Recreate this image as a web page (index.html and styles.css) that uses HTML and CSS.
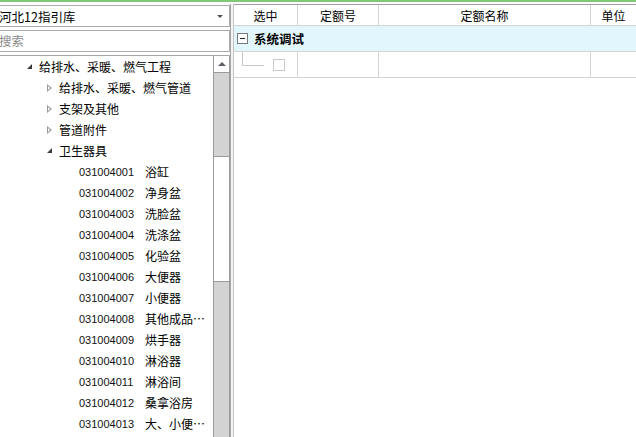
FILE: index.html
```html
<!DOCTYPE html>
<html lang="zh-CN">
<head>
  <meta charset="UTF-8" />
  <title>定额指引</title>
  <link rel="stylesheet" href="styles.css">
</head>
<body>
  <div class="topline"></div>
  <div class="main">
    <!-- Left: library + tree -->
    <div class="left">
      <div class="combo">
        <span class="combo-text">河北12指引库</span>
        <span class="combo-arrow"></span>
      </div>
      <div class="search">搜索</div>
      <div class="tree">
        <div class="tree-list">
          <div class="node lvl0"><span class="tri open"></span>给排水、采暖、燃气工程</div>
          <div class="node lvl1"><span class="tri closed"></span>给排水、采暖、燃气管道</div>
          <div class="node lvl1"><span class="tri closed"></span>支架及其他</div>
          <div class="node lvl1"><span class="tri closed"></span>管道附件</div>
          <div class="node lvl1"><span class="tri open"></span>卫生器具</div>
          <div class="node leaf"><span class="code">031004001</span><span class="name">浴缸</span></div>
          <div class="node leaf"><span class="code">031004002</span><span class="name">净身盆</span></div>
          <div class="node leaf"><span class="code">031004003</span><span class="name">洗脸盆</span></div>
          <div class="node leaf"><span class="code">031004004</span><span class="name">洗涤盆</span></div>
          <div class="node leaf"><span class="code">031004005</span><span class="name">化验盆</span></div>
          <div class="node leaf"><span class="code">031004006</span><span class="name">大便器</span></div>
          <div class="node leaf"><span class="code">031004007</span><span class="name">小便器</span></div>
          <div class="node leaf"><span class="code">031004008</span><span class="name">其他成品…</span></div>
          <div class="node leaf"><span class="code">031004009</span><span class="name">烘手器</span></div>
          <div class="node leaf"><span class="code">031004010</span><span class="name">淋浴器</span></div>
          <div class="node leaf"><span class="code">031004011</span><span class="name">淋浴间</span></div>
          <div class="node leaf"><span class="code">031004012</span><span class="name">桑拿浴房</span></div>
          <div class="node leaf"><span class="code">031004013</span><span class="name">大、小便…</span></div>
        </div>
        <div class="scrollbar">
          <div class="sb-up"><span class="up-arrow"></span></div>
          <div class="sb-track top"></div>
          <div class="sb-thumb"></div>
          <div class="sb-track"></div>
        </div>
      </div>
    </div>

    <div class="splitter"></div>

    <!-- Right: grid -->
    <div class="right">
      <div class="row header">
        <div class="cell c1">选中</div>
        <div class="cell c2">定额号</div>
        <div class="cell c3">定额名称</div>
        <div class="cell c4">单位</div>
      </div>
      <div class="row group">
        <span class="minus"></span>
        <span class="group-title">系统调试</span>
      </div>
      <div class="row data">
        <div class="cell c1">
          <span class="connector"></span>
          <span class="check"></span>
        </div>
        <div class="cell c2"></div>
        <div class="cell c3"></div>
        <div class="cell c4"></div>
      </div>
    </div>
  </div>
</body>
</html>
```

FILE: styles.css
```css
* {
  margin: 0;
  padding: 0;
  box-sizing: border-box;
}
body {
  width: 636px;
  height: 437px;
  overflow: hidden;
  background: #fff;
  color: #000;
  font-family: "Noto Sans CJK SC", "Liberation Sans", sans-serif;
  font-size: 12px;
}
.topline {
  height: 2px;
  background: #7ec876;
}
.main {
  display: flex;
  height: 435px;
}

/* Left panel */
.left {
  width: 230px;
  display: flex;
  flex-direction: column;
  padding-top: 3px;
}
.combo {
  height: 22px;
  border: 1px solid #ababab;
  border-left: none;
  display: flex;
  align-items: center;
  justify-content: space-between;
  padding-right: 6px;
}
.combo-text {
  font-size: 12.5px;
  margin-left: -1px;
}
.combo-arrow {
  width: 0;
  height: 0;
  border-left: 3px solid transparent;
  border-right: 3px solid transparent;
  border-top: 3px solid #555;
}
.search {
  height: 22px;
  margin-top: 3px;
  border: 1px solid #ababab;
  border-left: none;
  color: #8a8a8a;
  font-size: 12.5px;
  line-height: 20px;
  text-indent: -1px;
}
.tree {
  flex: 1;
  margin-top: 3px;
  border-top: 1px solid #a6a6a6;
  display: flex;
  overflow: hidden;
}
.tree-list {
  flex: 1;
  overflow: hidden;
}
.node {
  height: 21px;
  display: flex;
  align-items: center;
  white-space: nowrap;
}
.node:first-child {
  height: 21px;
}
.lvl0 {
  padding-left: 25px;
}
.lvl1 {
  padding-left: 45px;
}
.tri {
  width: 14px;
  display: inline-block;
  position: relative;
  height: 10px;
}
.tri.closed::before {
  content: "";
  position: absolute;
  left: 2px;
  top: 1px;
  border-top: 4px solid transparent;
  border-bottom: 4px solid transparent;
  border-left: 5px solid #9a9a9a;
}
.tri.closed::after {
  content: "";
  position: absolute;
  left: 3px;
  top: 3px;
  border-top: 2px solid transparent;
  border-bottom: 2px solid transparent;
  border-left: 2.5px solid #fff;
}
.tri.open::before {
  content: "";
  position: absolute;
  left: 2px;
  top: 2px;
  border-left: 5px solid transparent;
  border-bottom: 5px solid #3a3a3a;
}
.leaf {
  padding-left: 79px;
}
.code {
  width: 66px;
  font-family: "Liberation Sans", sans-serif;
  font-size: 11px;
  color: #111;
}
.name {
  font-size: 12px;
}

/* Scrollbar */
.scrollbar {
  width: 17px;
  display: flex;
  flex-direction: column;
  border-left: 1px solid #9a9a9a;
  border-right: 1px solid #9a9a9a;
}
.sb-up {
  height: 17px;
  background: #fff;
  border-bottom: 1px solid #9a9a9a;
  display: flex;
  align-items: center;
  justify-content: center;
}
.up-arrow {
  width: 0;
  height: 0;
  border-left: 4px solid transparent;
  border-right: 4px solid transparent;
  border-bottom: 4px solid #5d5d6a;
}
.sb-track {
  background: #d3d3d3;
  flex: 1;
}
.sb-track.top {
  flex: none;
  height: 83px;
}
.sb-thumb {
  height: 126px;
  background: #fff;
  border-top: 1px solid #9a9a9a;
  border-bottom: 1px solid #9a9a9a;
}

.splitter {
  width: 4px;
  margin-top: 2px;
  border-left: 1px solid #a6a6a6;
  border-right: 1px solid #c4c4c4;
  background: #f4f4f4;
}

/* Right grid */
.right {
  flex: 1;
  padding-top: 2px;
}
.row {
  display: flex;
}
.cell {
  border-right: 1px solid #d4d4d4;
  display: flex;
  align-items: center;
  justify-content: center;
}
.c1 { width: 64px; }
.c2 { width: 81px; }
.c3 { width: 212px; }
.c4 { flex: 1; border-right: none; }
.header {
  height: 22px;
  border-top: 1px solid #a0a0a0;
  border-bottom: 1px solid #d4d4d4;
}
.header .cell {
  font-size: 12px;
}
.group {
  height: 26px;
  background: #e1f6fd;
  border-bottom: 1px solid #d4d4d4;
  align-items: center;
  padding-left: 3px;
}
.minus {
  width: 11px;
  height: 11px;
  border: 1px solid #7a7a7a;
  background: #fff;
  position: relative;
  margin-right: 6px;
}
.minus::after {
  content: "";
  position: absolute;
  left: 2px;
  top: 4px;
  width: 5px;
  height: 1px;
  background: #222;
}
.group-title {
  font-weight: bold;
  font-size: 12.5px;
}
.data {
  height: 26px;
  border-bottom: 1px solid #d4d4d4;
}
.data .c1 {
  position: relative;
}
.connector {
  position: absolute;
  left: 8px;
  top: 0;
  width: 22px;
  height: 14px;
  border-left: 1px solid #c8c8c8;
  border-bottom: 1px solid #c8c8c8;
}
.check {
  width: 12px;
  height: 12px;
  border: 1px solid #c9c9c9;
  background: #fff;
  margin-left: 26px;
  margin-top: 1px;
}
```
